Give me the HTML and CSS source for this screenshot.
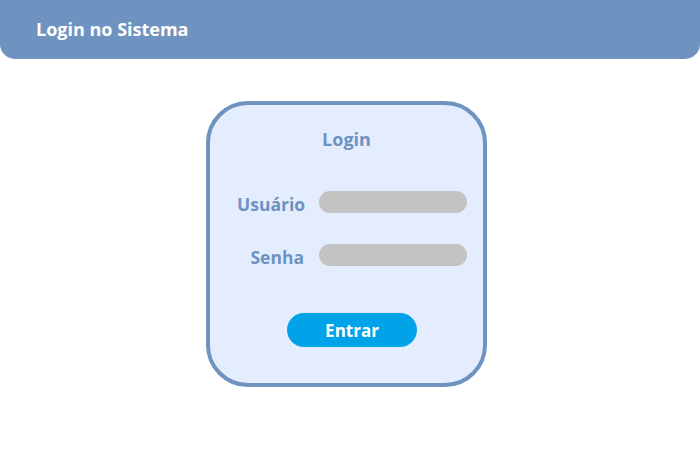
FILE: index.html
```html
<!DOCTYPE html>
<html lang="pt">
<head>
<meta charset="utf-8">
<title>Login no Sistema</title>
<link rel="stylesheet" href="styles.css">
</head>
<body>
<header class="topbar">
  <h1 class="topbar-title">Login no Sistema</h1>
</header>
<main class="stage">
  <section class="card">
    <h2 class="card-title">Login</h2>
    <form class="form">
      <label class="field-label" for="usuario">Usuário</label>
      <input class="field-input" id="usuario" type="text">
      <label class="field-label" for="senha">Senha</label>
      <input class="field-input" id="senha" type="password">
      <div class="actions">
        <button class="btn" type="button">Entrar</button>
      </div>
    </form>
  </section>
</main>
</body>
</html>
```

FILE: styles.css
```css
* { box-sizing: border-box; }
html, body { margin: 0; padding: 0; background: #ffffff; }
body { font-family: "Open Sans", "Noto Sans", sans-serif; font-weight: 700; }

.topbar {
  height: 59px;
  background: #6f93c0;
  border-radius: 0 0 15px 15px;
  display: flex;
  align-items: center;
  padding: 0 0 2px 36px;
}
.topbar-title {
  margin: 0;
  font-size: 18px;
  font-weight: 700;
  color: #ffffff;
}

.stage {
  display: flex;
  justify-content: center;
  padding: 42px 7px 0 0;
}

.card {
  width: 281px;
  height: 286px;
  border: 4px solid #6f93c0;
  border-radius: 42px;
  background: #e3edfe;
  padding: 22px 0 0 0;
}
.card-title {
  margin: 0;
  text-align: center;
  font-size: 18px;
  line-height: 24px;
  font-weight: 700;
  color: #6f93c0;
}

.form {
  margin: 40px 0 0 27px;
  width: 230px;
  display: grid;
  grid-template-columns: 67px 148px;
  column-gap: 15px;
  row-gap: 31px;
  align-items: center;
}
.field-label {
  text-align: right;
  font-size: 17.5px;
  line-height: 22px;
  padding-top: 2px;
  margin-bottom: -2px;
  color: #6f93c0;
  white-space: nowrap;
}
.field-input {
  width: 148px;
  height: 22px;
  border: none;
  border-radius: 11px;
  background: #c3c3c3;
  margin: 0;
  padding: 0;
}
.actions {
  grid-column: 1 / 3;
  display: flex;
  justify-content: center;
  margin-top: 16px;
}
.btn {
  width: 130px;
  height: 34px;
  border: none;
  border-radius: 17px;
  background: #00a3e8;
  color: #ffffff;
  font-family: inherit;
  font-size: 17px;
  font-weight: 700;
  padding: 0;
}
```
